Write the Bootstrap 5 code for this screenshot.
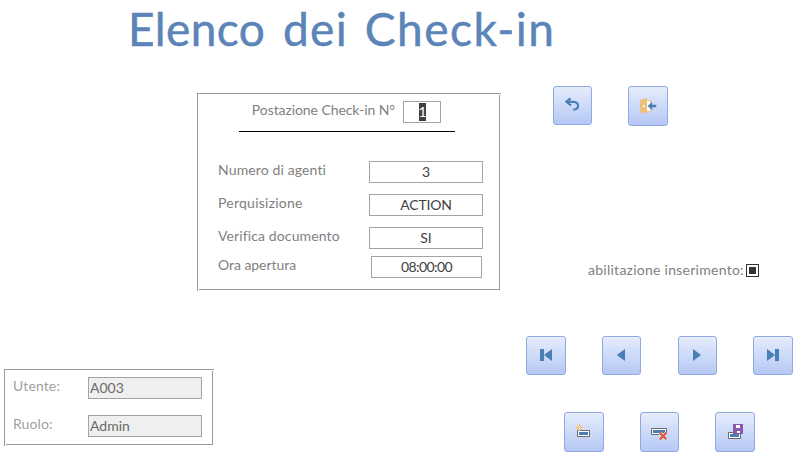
<!DOCTYPE html>
<html lang="it">
<head>
<meta charset="utf-8">
<meta name="viewport" content="width=device-width, initial-scale=1">
<title>Elenco dei Check-in</title>
<link href="https://cdn.jsdelivr.net/npm/bootstrap@5.3.0/dist/css/bootstrap.min.css" rel="stylesheet">
<style>
body{width:806px;height:458px;background:#fff;font-family:Lato,"Liberation Sans",sans-serif;font-size:14px;line-height:20px;color:#7f7f7f;font-variant-ligatures:none}
.page-title{height:61px;padding:1px 0 0 128px;font-size:46px;line-height:56px;font-weight:400;color:#5b84b8;white-space:nowrap;-webkit-text-stroke:.5px #5b84b8}
.word-a{letter-spacing:.4px}
.word-b{letter-spacing:1.3px;margin-left:6px}
.word-c{letter-spacing:1.5px;margin-left:5px}
.left-side{width:505px;height:397px}
.etched{background:linear-gradient(#9a9a9a,#9a9a9a) 0 0/100% 1px,linear-gradient(#9a9a9a,#9a9a9a) 0 0/1px 100%,linear-gradient(#9a9a9a,#9a9a9a) right 1px top 2px/1px calc(100% - 3px),linear-gradient(#9a9a9a,#9a9a9a) 2px calc(100% - 1px)/calc(100% - 3px) 1px;background-repeat:no-repeat}
.details{width:304px;height:198px;margin:32px 0 0 197px;padding:8px 18px 0 21px}
.user-box{width:210px;height:77px;margin:78px 0 0 4px;padding:8px 12px 0 9px;color:#a0a0a0}
.field{width:114px;height:22px;border:1px solid #a3a3a3;background:#fff;color:#404040;line-height:19px;text-align:center;white-space:nowrap}
.field-sm{width:38px;margin-right:42px}
.field-time{width:111px;margin-right:1px;letter-spacing:-.6px}
.field-act{letter-spacing:-.2px}
.field-off{background:#efefef;color:#6a6a6a;text-align:left;padding-left:1px}
.picked{background:#404040;color:#fff;display:inline-block;height:18px;line-height:18px;margin-top:1px;width:7px;vertical-align:top}
.fld-row{height:22px}
.fld-row>label{line-height:18px;white-space:nowrap}
.station-label{letter-spacing:-.08px}
.rule{width:216px;height:1px;background:#000;margin:8px 0 29px 21px}
.gap-row{margin-bottom:11px}
.gap-tight{margin-bottom:7px}
.sp-a{letter-spacing:-.05px}
.sp-b{letter-spacing:.13px}
.sp-c{letter-spacing:.25px}
.sp-d{letter-spacing:.12px}
.right-side{width:301px;height:397px;padding-top:25px}
.tool{flex:none;width:39px;height:39px;border:1px solid #8faadf;border-radius:3px;background:linear-gradient(#e5ecfb,#b5c8f5);padding:0}
.w40{width:40px}
.h40{height:40px}
.tool svg{display:block;width:100%;height:100%}
.tools-a{padding-left:48px;gap:36px;height:40px}
.enable{margin:137px 0 0 83px;height:16px;line-height:13px;white-space:nowrap;letter-spacing:.26px}
.enable-text{width:157px}
.tri-box{flex:none;width:13px;height:13px;border:1px solid #333;padding:2px;background:#fff;margin:1px 0 0 1px}
.tri-box>span{display:block;width:7px;height:7px;background:#333}
.tools-b{margin-top:57px;padding-left:21px;height:39px;gap:36px}
.tools-b .next-tool{margin-left:1px}
.tools-c{margin-top:37px;padding-left:59px;height:40px;gap:36px}
</style>
</head>
<body class="overflow-hidden">
<h1 class="page-title m-0"><span class="word-a">Elenco</span> <span class="word-b">dei</span> <span class="word-c">Check-in</span></h1>
<main class="d-flex">
<section class="left-side">
<form class="etched details">
<div class="fld-row d-flex"><label class="ms-auto me-2 station-label">Postazione Check-in N°</label><div class="field field-sm"><span class="picked">1</span></div></div>
<div class="rule"></div>
<div class="fld-row gap-row d-flex justify-content-between"><label class="sp-b">Numero di agenti</label><div class="field">3</div></div>
<div class="fld-row gap-row d-flex justify-content-between"><label class="sp-c">Perquisizione</label><div class="field field-act">ACTION</div></div>
<div class="fld-row gap-tight d-flex justify-content-between"><label class="sp-d">Verifica documento</label><div class="field">SI</div></div>
<div class="fld-row d-flex justify-content-between"><label class="sp-a">Ora apertura</label><div class="field field-time">08:00:00</div></div>
</form>
<div class="etched user-box">
<div class="fld-row d-flex justify-content-between mb-3"><label class="sp-b">Utente:</label><div class="field field-off">A003</div></div>
<div class="fld-row d-flex justify-content-between"><label class="sp-b">Ruolo:</label><div class="field field-off">Admin</div></div>
</div>
</section>
<section class="right-side">
<div class="tools-a d-flex">
<button class="tool" type="button" aria-label="Annulla"><svg viewBox="1 1 37 37" fill="none" stroke="#4a7fb5" stroke-width="2.2"><path d="M17.5 12.3L13.3 15.8L18 19.5M13.5 15.9H20.8C26.6 16 26.6 23.6 20.2 23.7"/></svg></button>
<button class="tool w40 h40" type="button" aria-label="Esci"><svg viewBox="1 1 38 38"><path d="M18.5 14.5H22.5V25.5H18.5z" fill="#fff" stroke="#edc07d"/><path d="M12 14L19 12V28L12 26z" fill="#edc07d"/><path d="M15 19h1.6v2H15z" fill="#fff"/><path d="M19.8 20L24 16.4V19H28V21H24V23.6z" fill="#4a7fb5" stroke="#4a7fb5" stroke-width=".5"/></svg></button>
</div>
<div class="enable d-flex"><span class="enable-text">abilitazione inserimento:</span><span class="tri-box"><span></span></span></div>
<div class="tools-b d-flex">
<button class="tool w40" type="button" aria-label="Primo"><svg viewBox="1 1 38 37" fill="#4a7fb5"><path d="M14 13h4v12h-4zM18 19L26 13V25z"/></svg></button>
<button class="tool" type="button" aria-label="Precedente"><svg viewBox="1 1 37 37" fill="#4a7fb5"><path d="M14.8 19L23 13V25z"/></svg></button>
<button class="tool next-tool" type="button" aria-label="Successivo"><svg viewBox="1 1 37 37" fill="#4a7fb5"><path d="M23 19L15 13V25z"/></svg></button>
<button class="tool w40" type="button" aria-label="Ultimo"><svg viewBox="1 1 38 37" fill="#4a7fb5"><path d="M22 13h4v12h-4zM22 19L14 13V25z"/></svg></button>
</div>
<div class="tools-c d-flex">
<button class="tool w40 h40" type="button" aria-label="Nuovo"><svg viewBox="1 1 38 38"><path d="M13.5 18.5H25.5V24.5H13.5z" fill="#fff" stroke="#6b6b6b"/><path d="M15 20h9v3h-9z" fill="#4a7fb5"/><circle cx="15.5" cy="15.5" r="3" fill="#dfe8fb"/><path d="M15.5 12V19M12 15.5H19M13 13L18 18M18 13L13 18" stroke="#e8b96d" stroke-width="1"/><circle cx="15.5" cy="15.5" r="1" fill="#fff3d8"/></svg></button>
<button class="tool h40" type="button" aria-label="Elimina"><svg viewBox="1 1 37 38"><path d="M11.5 16.5H26.5V22.5H11.5z" fill="#fff" stroke="#6b6b6b"/><path d="M13 18h12v3H13z" fill="#4a7fb5"/><path d="M19.8 20.8L26.3 27.3M26.5 20.5L19.8 27.6" stroke="#dfe8fb" stroke-width="3.2"/><path d="M19.8 20.8L26.3 27.3M26.5 20.5L19.8 27.6" stroke="#dc573c" stroke-width="2.2"/></svg></button>
<button class="tool w40 h40" type="button" aria-label="Salva"><svg viewBox="1 1 38 38"><path d="M13.5 20.5H25.5V26.5H13.5z" fill="#fff" stroke="#6b6b6b"/><path d="M15 22h9v3h-9z" fill="#4a7fb5"/><path d="M18 12h10v10H18z" fill="#8a58a8"/><path d="M21 13h4v3h-4zM22 19h3v2h-3z" fill="#fff"/></svg></button>
</div>
</section>
</main>
<script src="https://cdn.jsdelivr.net/npm/bootstrap@5.3.0/dist/js/bootstrap.bundle.min.js"></script>
</body>
</html>
